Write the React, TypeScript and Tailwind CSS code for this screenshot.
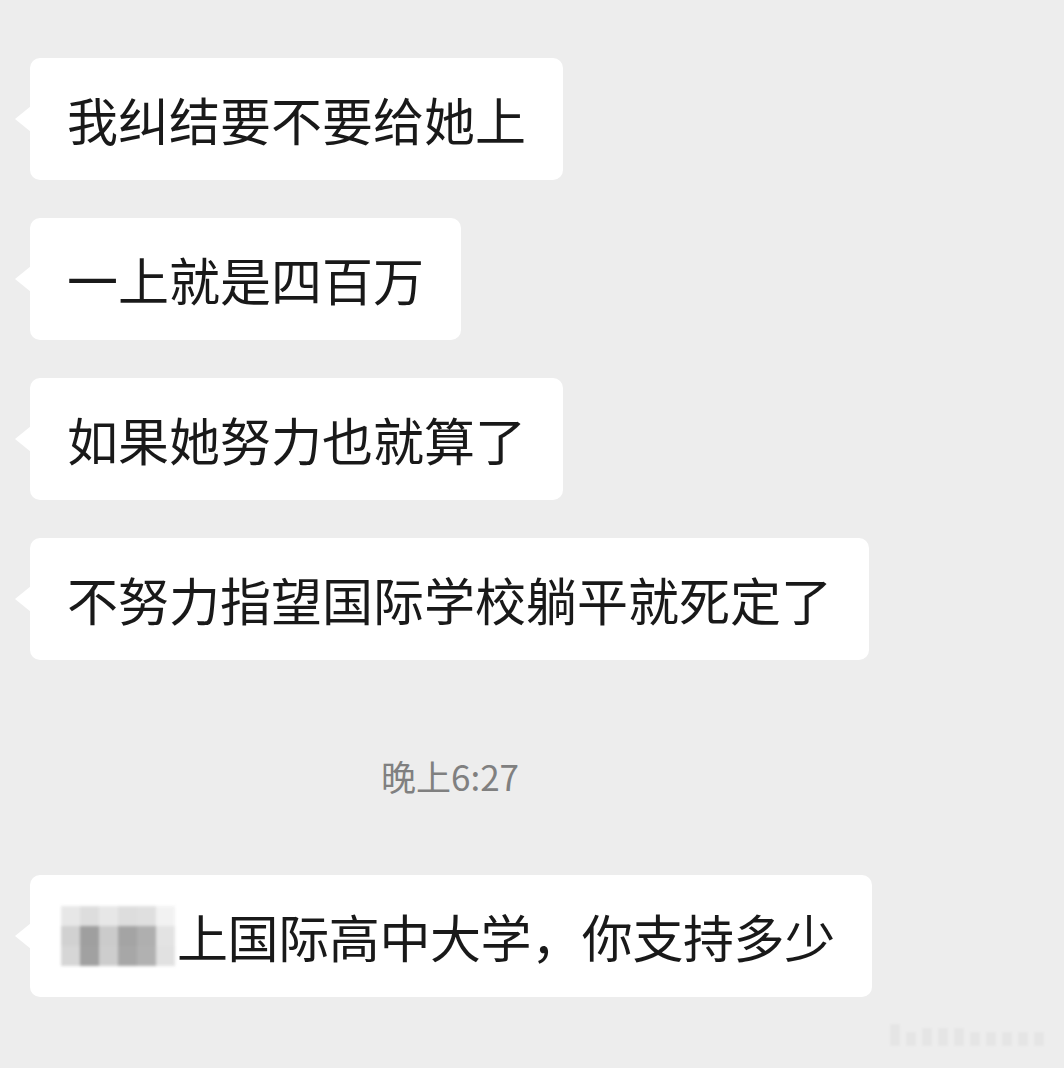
const font = { fontFamily: '"Noto Sans CJK SC", "Noto Sans", sans-serif' };

const mosaic = [
  ['#e6e6e6', '#dcdcdc', '#e6e6e6', '#dcdcdc', '#dedede', '#f2f2f2'],
  ['#cfcfcf', '#9a9a9a', '#c9c9c9', '#a0a0a0', '#ababab', '#e2e2e2'],
  ['#d4d4d4', '#9c9c9c', '#cbcbcb', '#a3a3a3', '#adadad', '#e0e0e0'],
];

const Bubble = ({ children }: { children: React.ReactNode }) => (
  <div className="relative">
    <div className="absolute left-[-15px] top-1/2 -translate-y-1/2 w-0 h-0 border-y-[13px] border-y-transparent border-r-[16px] border-r-white" />
    <div className="h-[122px] flex items-center px-[37px] bg-white rounded-[10px] text-[51px] leading-none text-[#191919] whitespace-nowrap">
      {children}
    </div>
  </div>
);

const Blur = () => (
  <span className="inline-flex flex-col mr-[2px] blur-[1.5px] opacity-95">
    {mosaic.map((row, i) => (
      <span key={i} className="flex">
        {row.map((c, j) => (
          <span key={j} className="w-[19px] h-[20px]" style={{ backgroundColor: c }} />
        ))}
      </span>
    ))}
  </span>
);

export default function App() {
  return (
    <div className="w-[1064px] h-[1068px] bg-[#ededed] overflow-hidden relative" style={font}>
      <div className="flex flex-col items-start gap-[38px] pt-[58px] pl-[30px]">
        <Bubble>我纠结要不要给她上</Bubble>
        <Bubble>一上就是四百万</Bubble>
        <Bubble>如果她努力也就算了</Bubble>
        <Bubble>不努力指望国际学校躺平就死定了</Bubble>
      </div>

      <div className="w-[900px] flex justify-center mt-[91px] mb-[74px] text-[35px] leading-[50px] text-[#808080]">
        晚上6:27
      </div>

      <div className="flex items-start pl-[30px]">
        <Bubble>
          <span className="inline-flex items-center ml-[-6px] tracking-[-0.4px]">
            <Blur />
            上国际高中大学，你支持多少
          </span>
        </Bubble>
      </div>

      <div className="absolute right-[20px] bottom-[22px] flex items-end gap-[6px] opacity-25 blur-[1px]">
        {[22, 14, 18, 18, 18, 14, 14, 14, 14, 14].map((h, i) => (
          <span key={i} className="w-[10px] bg-[#d0d0d0]" style={{ height: h }} />
        ))}
      </div>
    </div>
  );
}
